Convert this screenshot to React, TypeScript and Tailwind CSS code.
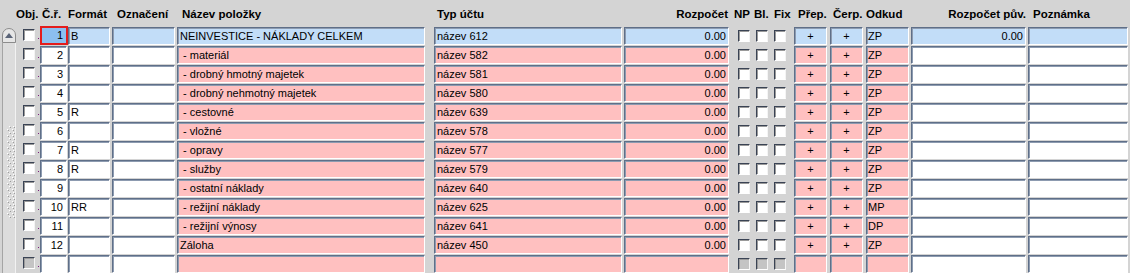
import React from "react";

type Row = {
  n: string;
  f: string;
  name: string;
  typ: string;
  odkud: string;
};

const rows: Row[] = [
  { n: "1", f: "B", name: "NEINVESTICE - NÁKLADY CELKEM", typ: "název 612", odkud: "ZP" },
  { n: "2", f: "", name: " - materiál", typ: "název 582", odkud: "ZP" },
  { n: "3", f: "", name: " - drobný hmotný majetek", typ: "název 581", odkud: "ZP" },
  { n: "4", f: "", name: " - drobný nehmotný majetek", typ: "název 580", odkud: "ZP" },
  { n: "5", f: "R", name: " - cestovné", typ: "název 639", odkud: "ZP" },
  { n: "6", f: "", name: " - vložné", typ: "název 578", odkud: "ZP" },
  { n: "7", f: "R", name: " - opravy", typ: "název 577", odkud: "ZP" },
  { n: "8", f: "R", name: " - služby", typ: "název 579", odkud: "ZP" },
  { n: "9", f: "", name: " - ostatní náklady", typ: "název 640", odkud: "ZP" },
  { n: "10", f: "RR", name: " - režijní náklady", typ: "název 625", odkud: "MP" },
  { n: "11", f: "", name: " - režijní výnosy", typ: "název 641", odkud: "DP" },
  { n: "12", f: "", name: "Záloha", typ: "název 450", odkud: "ZP" },
  { n: "", f: "", name: "", typ: "", odkud: "" },
];

const cols =
  "grid grid-cols-[23px_28px_44px_65px_257px_190px_110px_20px_18px_22px_36px_36px_45px_117px_102px]";

const field =
  "h-[18px] flex items-center overflow-hidden whitespace-pre text-[11px] leading-none text-black border border-t-[#5f6f88] border-l-[#5f6f88] border-r-white border-b-white shadow-[inset_1px_1px_0_#8d9bb0]";

const BLUE = "bg-[#c2ddf8]";
const PINK = "bg-[#ffc0c0]";
const WHITE = "bg-white";

function Check({ disabled }: { disabled?: boolean }) {
  return (
    <div
      className={`h-[12px] w-[12px] border border-t-[#3a4354] border-l-[#3a4354] border-r-[#f4f4f4] border-b-white shadow-[inset_1px_1px_0_#9a9a9a] ${
        disabled ? "bg-[#c4c4c4]" : "bg-white"
      }`}
    />
  );
}

function Scrollbar() {
  return (
    <div className="flex w-[17px] flex-col">
      <div className="h-[28px]" />
      <div className="ml-[2px] flex h-[15px] w-[14px] items-center justify-center rounded-t-[7px] border border-[#8c8c8c] bg-[#e6e6e6]">
        <svg width="8" height="5" viewBox="0 0 8 5">
          <path d="M0 5 L4 0 L8 5 Z" fill="#5a6478" />
        </svg>
      </div>
      <div className="ml-[2px] flex w-[14px] flex-1 flex-col border-l border-r border-l-[#a4a4a4] border-r-[#f2f2f2] bg-[#dcdcdc]">
        <div className="h-[83px]" />
        <svg width="12" height="94" viewBox="0 0 12 94" className="ml-[1px]">
          {Array.from({ length: 31 }).map((_, i) => (
            <g key={i}>
              <rect x={i % 2 ? 3 : 5} y={i * 3} width="1" height="1" fill="#ffffff" />
              <rect x={i % 2 ? 4 : 6} y={i * 3 + 1} width="1" height="1" fill="#9c9c9c" />
              <rect x={i % 2 ? 8 : 9} y={i * 3} width="1" height="1" fill="#ffffff" />
              <rect x={i % 2 ? 9 : 10} y={i * 3 + 1} width="1" height="1" fill="#9c9c9c" />
            </g>
          ))}
        </svg>
      </div>
    </div>
  );
}

function Header() {
  const h = "text-[11.5px] font-bold leading-none text-black whitespace-nowrap";
  return (
    <div className={`${cols} h-[28px] items-end pb-[6px] ${h}`}>
      <div className="-ml-[1px]">Obj.</div>
      <div className="pl-[2px]">Č.ř.</div>
      <div>Formát</div>
      <div className="pl-[5px]">Označení</div>
      <div className="pl-[5px]">Název položky</div>
      <div className="pl-[3px]">Typ účtu</div>
      <div className="pr-[6px] text-right">Rozpočet</div>
      <div>NP</div>
      <div>Bl.</div>
      <div className="pl-[2px]">Fix</div>
      <div className="pl-[4px]">Přep.</div>
      <div className="pl-[3px]">Čerp.</div>
      <div>Odkud</div>
      <div className="pr-[2px] text-right">Rozpočet pův.</div>
      <div className="pl-[5px]">Poznámka</div>
    </div>
  );
}

function DataRow({ r, i }: { r: Row; i: number }) {
  const first = i === 0;
  const empty = r.n === "";
  const mid = first ? BLUE : PINK;
  const side = first ? BLUE : WHITE;
  return (
    <div className={`${cols} h-[19px] items-start pt-[1px]`}>
      <div className="flex items-start pl-[6px] pt-[2px]">
        <Check disabled={empty} />
        <div className="ml-[3px] mt-[9px] h-[1px] w-[1px] bg-[#7a1a7a]" />
      </div>
      <div>
        {first ? (
          <div className="flex h-[19px] w-[28px] -mt-[1px] items-center justify-end border-2 border-[#e41c1c] bg-[#8cbff0] pr-[3px] text-[11px] leading-none text-black">
            {r.n}
          </div>
        ) : (
          <div className={`${field} ${WHITE} w-[27px] justify-end pr-[3px]`}>{r.n}</div>
        )}
      </div>
      <div>
        <div className={`${field} ${side} w-[42px] pl-[2px]`}>{r.f}</div>
      </div>
      <div>
        <div className={`${field} ${side} w-[63px]`} />
      </div>
      <div>
        <div className={`${field} ${mid} w-[248px] pl-[2px]`}>{r.name}</div>
      </div>
      <div>
        <div className={`${field} ${mid} w-[188px] pl-[2px]`}>{r.typ}</div>
      </div>
      <div>
        <div className={`${field} ${mid} w-[105px] justify-end pr-[2px]`}>{empty ? "" : "0.00"}</div>
      </div>
      <div className="pl-[4px] pt-[3px]">
        <Check disabled={empty} />
      </div>
      <div className="pl-[2px] pt-[3px]">
        <Check disabled={empty} />
      </div>
      <div className="pl-[2px] pt-[3px]">
        <Check disabled={empty} />
      </div>
      <div>
        <div className={`${field} ${mid} w-[33px] justify-center`}>{empty ? "" : "+"}</div>
      </div>
      <div>
        <div className={`${field} ${mid} w-[33px] justify-center`}>{empty ? "" : "+"}</div>
      </div>
      <div>
        <div className={`${field} ${mid} w-[43px] pl-[1px]`}>{r.odkud}</div>
      </div>
      <div>
        <div className={`${field} ${side} w-[115px] justify-end pr-[2px]`}>{first ? "0.00" : ""}</div>
      </div>
      <div>
        <div className={`${field} ${side} w-[100px]`} />
      </div>
    </div>
  );
}

export default function App() {
  return (
    <div
      className="flex h-[273px] w-[1130px] overflow-hidden bg-[#d4d4d4]"
      style={{ fontFamily: '"Liberation Sans", Arial, sans-serif' }}
    >
      <Scrollbar />
      <div className="flex flex-col">
        <Header />
        {rows.map((r, i) => (
          <DataRow key={i} r={r} i={i} />
        ))}
      </div>
    </div>
  );
}
